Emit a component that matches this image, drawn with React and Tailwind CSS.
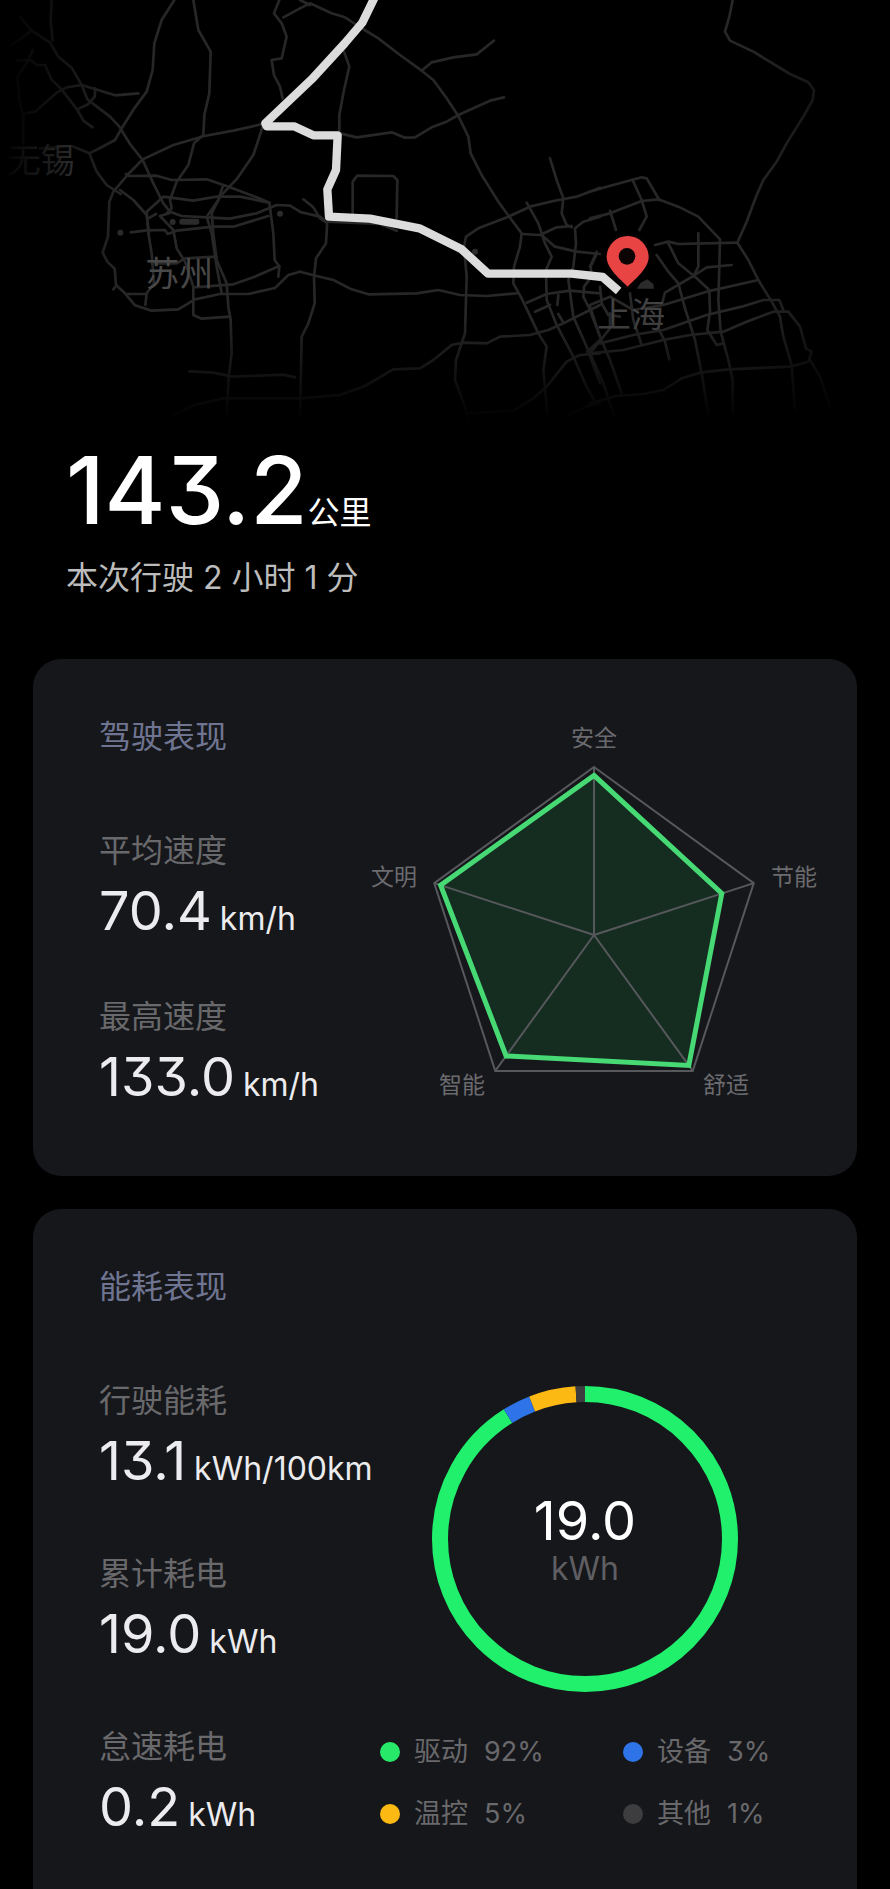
import React from "react";

const driving = [
  { label: "平均速度", value: "70.4", unit: "km/h" },
  { label: "最高速度", value: "133.0", unit: "km/h" },
];

const energy = [
  { label: "行驶能耗", value: "13.1", unit: "kWh/100km" },
  { label: "累计耗电", value: "19.0", unit: "kWh" },
  { label: "怠速耗电", value: "0.2", unit: "kWh" },
];

const usage = [
  { label: "驱动", percent: 92, color: "#20f06c", dot: "bg-[#27e868]" },
  { label: "设备", percent: 3, color: "#2e74e8", dot: "bg-[#2e74e8]" },
  { label: "温控", percent: 5, color: "#fdb913", dot: "bg-[#fdb913]" },
  { label: "其他", percent: 1, color: "#3d3d3f", dot: "bg-[#3d3d3f]" },
];

const scores = [
  { label: "安全", value: 0.95, x: 230, y: 26 },
  { label: "节能", value: 0.8, x: 430, y: 165 },
  { label: "舒适", value: 0.96, x: 362, y: 373 },
  { label: "智能", value: 0.89, x: 98, y: 373 },
  { label: "文明", value: 0.96, x: 30, y: 165 },
];

// Road polylines, one list per map tile
const westRoads = [
  "M155 0L152 60L158 122",
  "M60 50L95 92L150 128L175 170L215 203L245 255L262 298L330 350L358 380L390 432L428 480L460 550L490 610L510 635L545 648L620 652L690 656L770 640L830 615L870 617L900 635",
  "M35 135L95 92",
  "M98 150L80 190L52 230L58 300L70 350L70 430",
  "M50 182L92 180L110 195L135 195L155 240L185 268L232 330L250 362L278 382",
  "M75 340L105 335L170 278L200 262L245 255L345 286L415 280",
  "M286 265L284 290L265 312L232 328",
  "M523 0L485 60L463 130L458 210L440 275L405 322L365 385L345 420L300 444L268 460L215 438L120 445",
  "M268 460L290 515L320 555L362 582",
  "M580 0L595 90L632 155L628 280L613 345L610 405L582 430L565 495L530 545L510 600L515 625L500 640",
  "M788 372L700 392L613 408L520 435L428 478L385 522L340 575L328 605L324 710L308 758L322 785L344 806L348 855L375 880L405 916L455 932L535 928L585 898L660 882L745 882L825 864L865 825L900 815",
  "M340 868L350 855",
  "M378 522L385 528L470 527L515 540L620 538L690 562L770 592L808 608L820 700L824 780L838 800L835 830",
  "M808 608L720 590L650 590L580 602L490 590L440 635L445 700L455 760L462 850L440 880L436 915",
  "M445 655L468 642",
  "M360 570L400 600L440 645L447 700",
  "M788 380L760 465L712 535L660 590L635 640L640 700L650 780L680 850L685 920L692 960L695 1060L686 1130L680 1250",
  "M668 560L655 600L620 650L635 700L650 800L665 880",
  "M480 648L508 640M480 648L520 690L530 745L555 785L580 860L580 945L605 956L690 950",
  "M392 697L440 691L495 690L503 702L530 692L640 680L700 680L805 648",
  "M380 882L440 882",
  "M455 790L530 790L555 775L650 770",
  "M580 862L700 853L760 832L838 798",
  "M838 0L822 40L845 70L860 110L845 175L815 180L822 225L840 260L848 295",
  "M850 52L900 25",
  "M568 1114L640 1118L695 1130L850 1124L885 1132",
  "M510 1250L580 1216L670 1195L900 1195",
];

const centralRoads = [
  "M0 25L30 10L95 40L135 52L170 75L235 115L300 165L365 212L400 240L440 295L475 348L505 410L512 460L545 525L595 605L635 660L665 700L660 740L642 800L640 850L665 895L715 1000L740 1040L730 1110L742 1240",
  "M0 0L30 15",
  "M365 212L395 187L460 172L530 163L582 122",
  "M120 400L170 412L275 397L315 413L345 412L395 382L440 365L475 345L570 302L612 292",
  "M132 155L148 200L132 270L118 345L118 400",
  "M158 640L158 545L172 527L280 528L292 540L290 655",
  "M10 598L40 622L60 655L80 668",
  "M0 636L60 650L80 665L240 672L290 692",
  "M82 660L78 730L48 775L42 830L44 910L25 970L5 1010L0 1250",
  "M0 815L50 828L100 840L155 868L205 883L350 880L415 870L480 885L560 888L650 880",
  "M0 1195L120 1185L195 1158L280 1108L360 1105L400 1080L455 1035L490 1028L560 1030L600 1010L690 1005L745 990L800 965L870 930L900 915",
  "M900 563L830 590L760 603L690 620L625 650L535 685L498 710L492 740L500 830L495 1000L468 1080L465 1140L495 1220L505 1260",
  "M750 475L770 540L790 595L785 640L800 675L815 682",
  "M680 608L715 670L735 730L755 770L738 810L740 900L770 975L820 1070L860 1160L885 1205",
  "M668 702L720 705L770 682L815 678",
  "M725 705L765 740L830 755L900 762",
  "M900 650L850 665L825 685L828 730L820 800L805 840L820 950L860 1040L900 1150",
  "M890 762L872 800L875 830L852 860L850 890L870 930L900 1010",
  "M680 908L740 882L810 872L900 880",
  "M705 935L750 915M775 885L772 915M775 942L790 968",
  "M505 1240L640 1232L700 1195L740 1160L800 1085L840 1065L900 1060",
  "M800 1248L860 1220L900 1208",
  "M862 1055L900 1020",
];

const eastRoads = [
  "M428 0L418 50L405 95L420 122L490 155L600 222L655 247L672 270L668 300L640 350L590 430L560 485L520 540L498 590L470 665L442 728L475 780L505 840L545 905L570 950L580 1010L605 1095L615 1230",
  "M0 575L50 560L155 532L170 535L208 600",
  "M0 655L60 640L155 603L205 598L265 620L325 650L390 718L388 800L385 900L392 995L415 1080L428 1140L428 1240",
  "M128 540L155 600L170 650L148 690",
  "M60 632L78 690",
  "M0 800L20 755",
  "M195 735L235 725L265 732L442 728",
  "M235 730L265 790L315 830L358 870L360 935L352 990L380 1035L400 1030",
  "M325 700L325 800L310 830",
  "M200 765L235 815L265 850L285 925L315 1020L335 1120L355 1245",
  "M215 915L225 878L310 828L350 802L425 795",
  "M0 915L60 890L130 930L220 915L350 875L505 840",
  "M30 1030L130 1005L220 990L350 945L455 920L520 900L568 900L580 930",
  "M0 1060L100 1050L220 1020L300 1005L400 995L470 965L550 935L595 935L630 980L648 1045L665 1055L655 1085L600 1100L415 1108L330 1118L275 1135L220 1170L160 1182L80 1188L0 1210",
  "M660 1080L690 1130L720 1220",
  "M0 920L30 1010L60 1080L95 1180",
  "M0 1060L40 1150L75 1255",
  "M0 1060L60 985L60 940",
  "M30 860L35 910L55 945L90 950",
  "M120 880L130 960L155 1035",
  "M205 985L225 1025L238 1078",
];

function RouteMap() {
  return (
    <svg viewBox="0 0 2670 1290" className="block w-full" role="img" aria-label="行驶路线">
      <defs>
        <linearGradient id="fadeBottom" x1="0" y1="0" x2="0" y2="1">
          <stop offset="0.74" stopColor="#000" stopOpacity="0" />
          <stop offset="0.98" stopColor="#000" stopOpacity="1" />
        </linearGradient>
        <linearGradient id="fadeSides" x1="0" y1="0" x2="1" y2="0">
          <stop offset="0" stopColor="#000" stopOpacity="1" />
          <stop offset="0.14" stopColor="#000" stopOpacity="0" />
          <stop offset="0.84" stopColor="#000" stopOpacity="0" />
          <stop offset="1" stopColor="#000" stopOpacity="0.9" />
        </linearGradient>
      </defs>

      <g fill="none" stroke="#272727" strokeWidth="8" strokeLinejoin="round" strokeLinecap="round">
        <g>{westRoads.map((d) => <path key={d} d={d} />)}</g>
        <g transform="translate(900 0)">{centralRoads.map((d) => <path key={d} d={d} />)}</g>
        <g transform="translate(1770 0)">{eastRoads.map((d) => <path key={d} d={d} />)}</g>
      </g>
      <g fill="#2b2b2b">
        <circle cx="361" cy="698" r="9" />
        <circle cx="518" cy="666" r="9" />
        <circle cx="840" cy="641" r="9" />
        <circle cx="1425" cy="755" r="9" />
        <rect x="538" y="656" width="60" height="18" rx="8" />
        <path d="M1910 866L1922 848L1942 838L1960 852L1962 866Z" />
      </g>

      <g className="font-['Noto_Sans_CJK_SC',sans-serif]" fontSize="102" textAnchor="middle">
        <text x="538" y="859" fill="#484848">苏州</text>
        <text x="1893" y="982" fill="#424242">上海</text>
        <text x="122" y="518" fill="#484848">无锡</text>
      </g>

      <rect width="2670" height="1290" fill="url(#fadeSides)" />
      <rect width="2670" height="1290" fill="url(#fadeBottom)" />

      <path
        d="M1125 -10L1087 68L1034 130L935 238L796 370L800 379L882 379L940 406L1013 406L1008 510L982 568L987 650L1110 656L1258 685L1385 748L1464 821L1715 821L1808 831L1856 873"
        fill="none"
        stroke="#dcdcdc"
        strokeWidth="25"
        strokeLinejoin="round"
      />

      <path
        d="M1883 860C1862 838 1820 806 1820 771A63 63 0 1 1 1946 771C1946 806 1904 838 1883 860Z"
        fill="#e94444"
        stroke="#050203"
        strokeWidth="16"
        paintOrder="stroke"
      />
      <circle cx="1881" cy="769" r="25" fill="#0b0304" />
    </svg>
  );
}

function Card({ title, children, stats, className = "", listClassName = "" }) {
  return (
    <section className={`flex justify-between bg-[#16171b] pl-[66px] pr-[33px] ${className}`}>
      <div className="pt-[54px]">
        <h2 className="text-[32px] leading-[48px] text-[#6f7591]">{title}</h2>
        <dl className={`mt-[70px] flex flex-col ${listClassName}`}>
          {stats.map((stat) => (
            <div key={stat.label}>
              <dt className="text-[32px] leading-10 text-[#69696c]">{stat.label}</dt>
              <dd className="mt-2 flex h-16 items-baseline gap-2 whitespace-nowrap text-[#ececee]">
                <span className="text-[54px] leading-[64px]">{stat.value}</span>
                <span className="text-[32px] leading-10">{stat.unit}</span>
              </dd>
            </div>
          ))}
        </dl>
      </div>
      {children}
    </section>
  );
}

function RadarChart() {
  const cx = 230;
  const cy = 215;
  const radius = 168;
  const point = (scale, index) => {
    const angle = (index * 2 * Math.PI) / scores.length;
    return [cx + Math.sin(angle) * radius * scale, cy - Math.cos(angle) * radius * scale];
  };
  const outline = scores.map((_, i) => point(1, i).join(",")).join(" ");
  const shape = scores.map((s, i) => point(s.value, i).join(",")).join(" ");

  return (
    <svg viewBox="0 0 460 380" className="mt-[61px] h-[380px] w-[460px] shrink-0" role="img" aria-label="驾驶表现">
      <polygon points={shape} fill="#152c21" />
      <g stroke="#56585b" strokeWidth="2" fill="none">
        <polygon points={outline} />
        {scores.map((s, i) => {
          const [x, y] = point(1, i);
          return <line key={s.label} x1={cx} y1={cy} x2={x} y2={y} />;
        })}
      </g>
      <polygon points={shape} fill="none" stroke="#46d974" strokeWidth="5" />
      <g fontSize="23" fill="#6b6b6f" textAnchor="middle">
        {scores.map((s) => (
          <text key={s.label} x={s.x} y={s.y}>{s.label}</text>
        ))}
      </g>
    </svg>
  );
}

function UsageChart() {
  const total = usage.reduce((sum, item) => sum + item.percent, 0);
  let used = 0;

  return (
    <div className="w-[444px] shrink-0 pb-[54px] pt-[177px]">
      <div className="ml-[52px] grid w-[306px] place-items-center">
        <svg viewBox="0 0 306 306" className="col-start-1 row-start-1 w-full -rotate-90" aria-hidden="true">
          {usage.map((item) => {
            const offset = used;
            used += item.percent;
            return (
              <circle
                key={item.label}
                cx="153"
                cy="153"
                r="145"
                fill="none"
                stroke={item.color}
                strokeWidth="16"
                pathLength={total}
                strokeDasharray={`${item.percent} ${total - item.percent}`}
                strokeDashoffset={-offset}
              />
            );
          })}
        </svg>
        <p className="col-start-1 row-start-1 flex flex-col items-center">
          <span className="text-[54px] leading-[60px] text-white">19.0</span>
          <span className="text-[32px] leading-9 text-[#5f5f63]">kWh</span>
        </p>
      </div>
      <ul className="mt-10 grid grid-cols-[243px_1fr] gap-y-[22px] text-[27px] leading-10 text-[#69696c]">
        {usage.map((item) => (
          <li key={item.label} className="flex items-center whitespace-nowrap">
            <span className={`mr-3.5 size-5 rounded-full ${item.dot}`} />
            <span>{item.label}</span>
            <span className="ml-4">{item.percent}%</span>
          </li>
        ))}
      </ul>
    </div>
  );
}

export default function App() {
  return (
    <main className="flex min-h-screen flex-col bg-black font-['Inter','Noto_Sans_CJK_SC',sans-serif] [font-feature-settings:'cv09','ss03']">
      <RouteMap />

      <header className="px-[66px] pb-[57px]">
        <h1 className="flex items-baseline text-white">
          <span className="text-[93px] font-medium leading-[120px]">143.2</span>
          <span className="text-[32px]">公里</span>
        </h1>
        <p className="mt-1 text-[32px] leading-[48px] text-[#bcbcbc]">本次行驶 2 小时 1 分</p>
      </header>

      <div className="flex grow flex-col gap-[33px] px-[33px]">
        <Card title="驾驶表现" stats={driving} className="rounded-[28px] pb-[67px]" listClassName="gap-[54px]">
          <RadarChart />
        </Card>
        <Card title="能耗表现" stats={energy} className="grow rounded-t-[28px]" listClassName="gap-[61px]">
          <UsageChart />
        </Card>
      </div>
    </main>
  );
}
